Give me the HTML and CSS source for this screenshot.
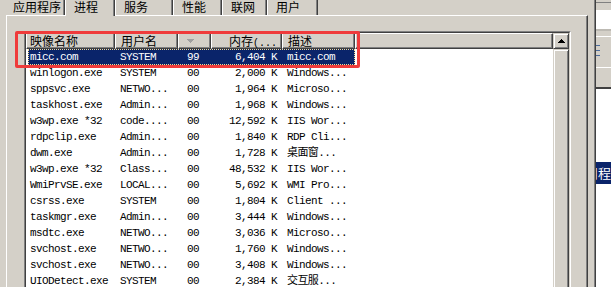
FILE: index.html
```html
<!DOCTYPE html>
<html lang="zh-CN">
  <head>
    <meta charset="UTF-8" />
    <meta name="viewport" content="width=device-width, initial-scale=1.0" />
    <title>Windows 任务管理器 - 进程</title>
    <link rel="stylesheet" href="styles.css">
  </head>
  <body>
    <div class="window">
      <div class="main">
        <div class="tabs">
          <div class="tab tab-apps">应用程序</div>
          <div class="tab tab-procs active">进程</div>
          <div class="tab tab-svcs">服务</div>
          <div class="tab tab-perf">性能</div>
          <div class="tab tab-net">联网</div>
          <div class="tab tab-users">用户</div>
        </div>
        <div class="panel">
          <div class="listview">
            <div class="list-inner">
              <div class="list-main">
                <div class="header">
                  <div class="hd hd-name">映像名称</div>
                  <div class="hd hd-user">用户名</div>
                  <div class="hd hd-cpu">
                    <svg class="sort-arrow" width="7" height="4" viewBox="0 0 7 4">
                      <path d="M0 0h7v1h-1v1h-1v1h-1v1h-1v-1h-1v-1h-1v-1h-1z" />
                    </svg>
                  </div>
                  <div class="hd hd-mem">内存<span class="mono">(...</span></div>
                  <div class="hd hd-desc">描述</div>
                  <div class="hd hd-fill"></div>
                </div>
                <div class="rows" id="rows"></div>
              </div>
              <div class="scrollbar">
                <div class="sb-btn">
                  <svg width="7" height="4" viewBox="0 0 7 4">
                    <path d="M3 0h1v1h1v1h1v1h1v1h-7v-1h1v-1h1v-1h1z" />
                  </svg>
                </div>
                <div class="sb-thumb"></div>
              </div>
            </div>
          </div>
        </div>
      </div>
      <div class="side">
        <div class="side-bar"></div>
        <div class="side-field"></div>
        <div class="side-sep"></div>
        <div class="side-icon">
          <svg width="4" height="12" viewBox="0 0 4 12">
            <path d="M0 0h4v1h-4zM0 5h4v1h-4zM0 10h4v1h-4z" />
          </svg>
        </div>
        <div class="side-gap"></div>
        <div class="side-list">
          <div class="side-sel"><span>用程序</span></div>
        </div>
      </div>
    </div>
    <div class="annotation"></div>
    <script>
      const processes = [
        { name: "micc.com", user: "SYSTEM", cpu: "99", mem: "6,404 K", desc: "micc.com" },
        { name: "winlogon.exe", user: "SYSTEM", cpu: "00", mem: "2,000 K", desc: "Windows..." },
        { name: "sppsvc.exe", user: "NETWO...", cpu: "00", mem: "1,964 K", desc: "Microso..." },
        { name: "taskhost.exe", user: "Admin...", cpu: "00", mem: "1,968 K", desc: "Windows..." },
        { name: "w3wp.exe *32", user: "code....", cpu: "00", mem: "12,592 K", desc: "IIS Wor..." },
        { name: "rdpclip.exe", user: "Admin...", cpu: "00", mem: "1,840 K", desc: "RDP Cli..." },
        { name: "dwm.exe", user: "Admin...", cpu: "00", mem: "1,728 K", desc: "桌面窗..." },
        { name: "w3wp.exe *32", user: "Class...", cpu: "00", mem: "48,532 K", desc: "IIS Wor..." },
        { name: "WmiPrvSE.exe", user: "LOCAL...", cpu: "00", mem: "5,692 K", desc: "WMI Pro..." },
        { name: "csrss.exe", user: "SYSTEM", cpu: "00", mem: "1,804 K", desc: "Client ..." },
        { name: "taskmgr.exe", user: "Admin...", cpu: "00", mem: "3,444 K", desc: "Windows..." },
        { name: "msdtc.exe", user: "NETWO...", cpu: "00", mem: "3,036 K", desc: "Microso..." },
        { name: "svchost.exe", user: "NETWO...", cpu: "00", mem: "1,760 K", desc: "Windows..." },
        { name: "svchost.exe", user: "NETWO...", cpu: "00", mem: "3,408 K", desc: "Windows..." },
        { name: "UIODetect.exe", user: "SYSTEM", cpu: "00", mem: "2,384 K", desc: "交互服..." },
      ];

      const rows = document.getElementById("rows");
      processes.forEach((p, i) => {
        const row = document.createElement("div");
        row.className = i === 0 ? "row selected" : "row";
        row.innerHTML = `<span class="cell c-name">${p.name}</span>
          <span class="cell c-user">${p.user}</span>
          <span class="cell c-cpu">${p.cpu}</span>
          <span class="cell c-mem">${p.mem}</span>
          <span class="cell c-desc">${p.desc}</span>`;
        rows.appendChild(row);
      });
    </script>
  </body>
</html>
```

FILE: styles.css
```css
body {
  margin: 0;
  width: 611px;
  height: 287px;
  overflow: hidden;
  position: relative;
  background-color: #d4d0c8;
  font-family: "Noto Sans CJK SC", sans-serif;
  color: #000;
}

.window {
  display: flex;
  height: 287px;
}

.main {
  width: 594px;
  display: flex;
  flex-direction: column;
  border-right: 1px solid #808080;
}

/* tabs - their tops run off the top of the shot */
.tabs {
  display: flex;
  align-items: flex-start;
  height: 19px;
  margin-top: -4px;
}

.tab {
  height: 19px;
  box-sizing: border-box;
  border-left: 1px solid #fff;
  border-right: 1px solid #404040;
  box-shadow: inset -1px 0 #808080;
  padding-top: 3px;
  padding-left: 8px;
  font-size: 12px;
  line-height: 16px;
  white-space: nowrap;
  background-color: #d4d0c8;
}

.tab.active {
  height: 20px;
  position: relative;
  z-index: 1;
}

.tab-apps {
  margin-left: -4px;
  width: 69px;
  padding-left: 16px;
}
.tab-procs {
  width: 50px;
}
.tab-svcs {
  width: 58px;
}
.tab-perf {
  width: 49px;
}
.tab-net {
  width: 45px;
}
.tab-users {
  width: 51px;
}

/* tab page */
.panel {
  flex: 1;
  width: 582px;
  margin-left: 6px;
  box-sizing: border-box;
  border-top: 1px solid #fff;
  border-left: 1px solid #fff;
  border-right: 1px solid #404040;
  box-shadow: inset -1px 0 #808080;
  padding: 15px 0 0 17px;
}

.listview {
  width: 547px;
  height: 262px;
  box-sizing: border-box;
  border: 1px solid;
  border-color: #808080 #fff #fff #808080;
}

.list-inner {
  height: 100%;
  box-sizing: border-box;
  border: 1px solid;
  border-color: #404040 #d4d0c8 #d4d0c8 #404040;
  display: flex;
  background-color: #fff;
}

.list-main {
  flex: 1;
}

.header {
  display: flex;
  height: 16px;
  background-color: #d4d0c8;
}

.hd {
  box-sizing: border-box;
  border: 1px solid;
  border-color: #fff #404040 #404040 #fff;
  box-shadow: inset -1px -1px #808080;
  padding-left: 5px;
  font-size: 12px;
  line-height: 14px;
  white-space: nowrap;
  overflow: hidden;
}

.hd-name {
  width: 89px;
  padding-left: 3px;
}
.hd-user {
  width: 63px;
}
.hd-cpu {
  width: 33px;
  padding-left: 8px;
  display: flex;
  align-items: center;
}
.hd-mem {
  width: 71px;
  text-align: right;
  padding-right: 4px;
}
.hd-desc {
  width: 73px;
}
.hd-fill {
  flex: 1;
}

.sort-arrow {
  fill: #a0a0a0;
  shape-rendering: crispEdges;
}

.mono {
  font-family: "Liberation Mono", monospace;
  font-size: 10px;
}

.rows {
  padding-left: 2px;
}

.row {
  display: grid;
  grid-template-columns: 87px 63px 33px 71px 73px;
  width: 327px;
  height: 16px;
  font-family: "Liberation Mono", "Noto Sans CJK SC", monospace;
  font-size: 11px;
  letter-spacing: -0.6px;
  line-height: 16px;
}

.row.selected {
  background-color: #0a246a;
  color: #fff;
  outline: 1px dotted #f5db95;
  outline-offset: -1px;
}

.cell {
  white-space: nowrap;
  overflow: hidden;
}
.c-name {
  padding-left: 2px;
}
.c-user {
  padding-left: 5px;
}
.c-cpu {
  padding-left: 9px;
}
.c-mem {
  text-align: right;
  padding-right: 5px;
}
.c-desc {
  padding-left: 5px;
}

/* scrollbar */
.scrollbar {
  width: 16px;
  display: flex;
  flex-direction: column;
  background-color: #d4d0c8;
}

.sb-btn,
.sb-thumb {
  box-sizing: border-box;
  border: 1px solid;
  border-color: #d4d0c8 #404040 #404040 #d4d0c8;
  box-shadow: inset 1px 1px #fff, inset -1px -1px #808080;
  background-color: #d4d0c8;
}

.sb-btn {
  height: 16px;
  display: flex;
  align-items: center;
  justify-content: center;
}

.sb-btn svg {
  fill: #000;
  shape-rendering: crispEdges;
}

.sb-thumb {
  flex: 1;
}

/* window behind, on the right */
.side {
  flex: 1;
  display: flex;
  flex-direction: column;
  border-left: 1px solid #404040;
  overflow: hidden;
}

.side-bar {
  height: 7px;
  margin-top: 2px;
  border-top: 1px solid #808080;
}

.side-field {
  height: 19px;
  background-color: #fff;
}

.side-sep {
  height: 8px;
  box-sizing: border-box;
  border-top: 2px solid #bdbab3;
  border-bottom: 1px solid #fff;
}

.side-icon {
  height: 31px;
  border-bottom: 1px solid #fff;
  padding-top: 8px;
  box-sizing: border-box;
}

.side-icon svg {
  display: block;
  fill: #4c6c9c;
  shape-rendering: crispEdges;
}

.side-gap {
  height: 19px;
  border-bottom: 2px solid #404040;
}

.side-list {
  flex: 1;
  background-color: #fff;
  padding-top: 73px;
}

.side-sel {
  height: 22px;
  background-color: #0a246a;
  color: #fff;
  font-size: 13px;
  line-height: 22px;
  white-space: nowrap;
  overflow: hidden;
}

.side-sel span {
  margin-left: -11px;
}

/* red mark drawn over the screenshot */
.annotation {
  position: absolute;
  left: 15px;
  top: 31px;
  width: 345px;
  height: 37px;
  box-sizing: border-box;
  border: 3px solid #ef3b3b;
  border-radius: 2px;
}
```
